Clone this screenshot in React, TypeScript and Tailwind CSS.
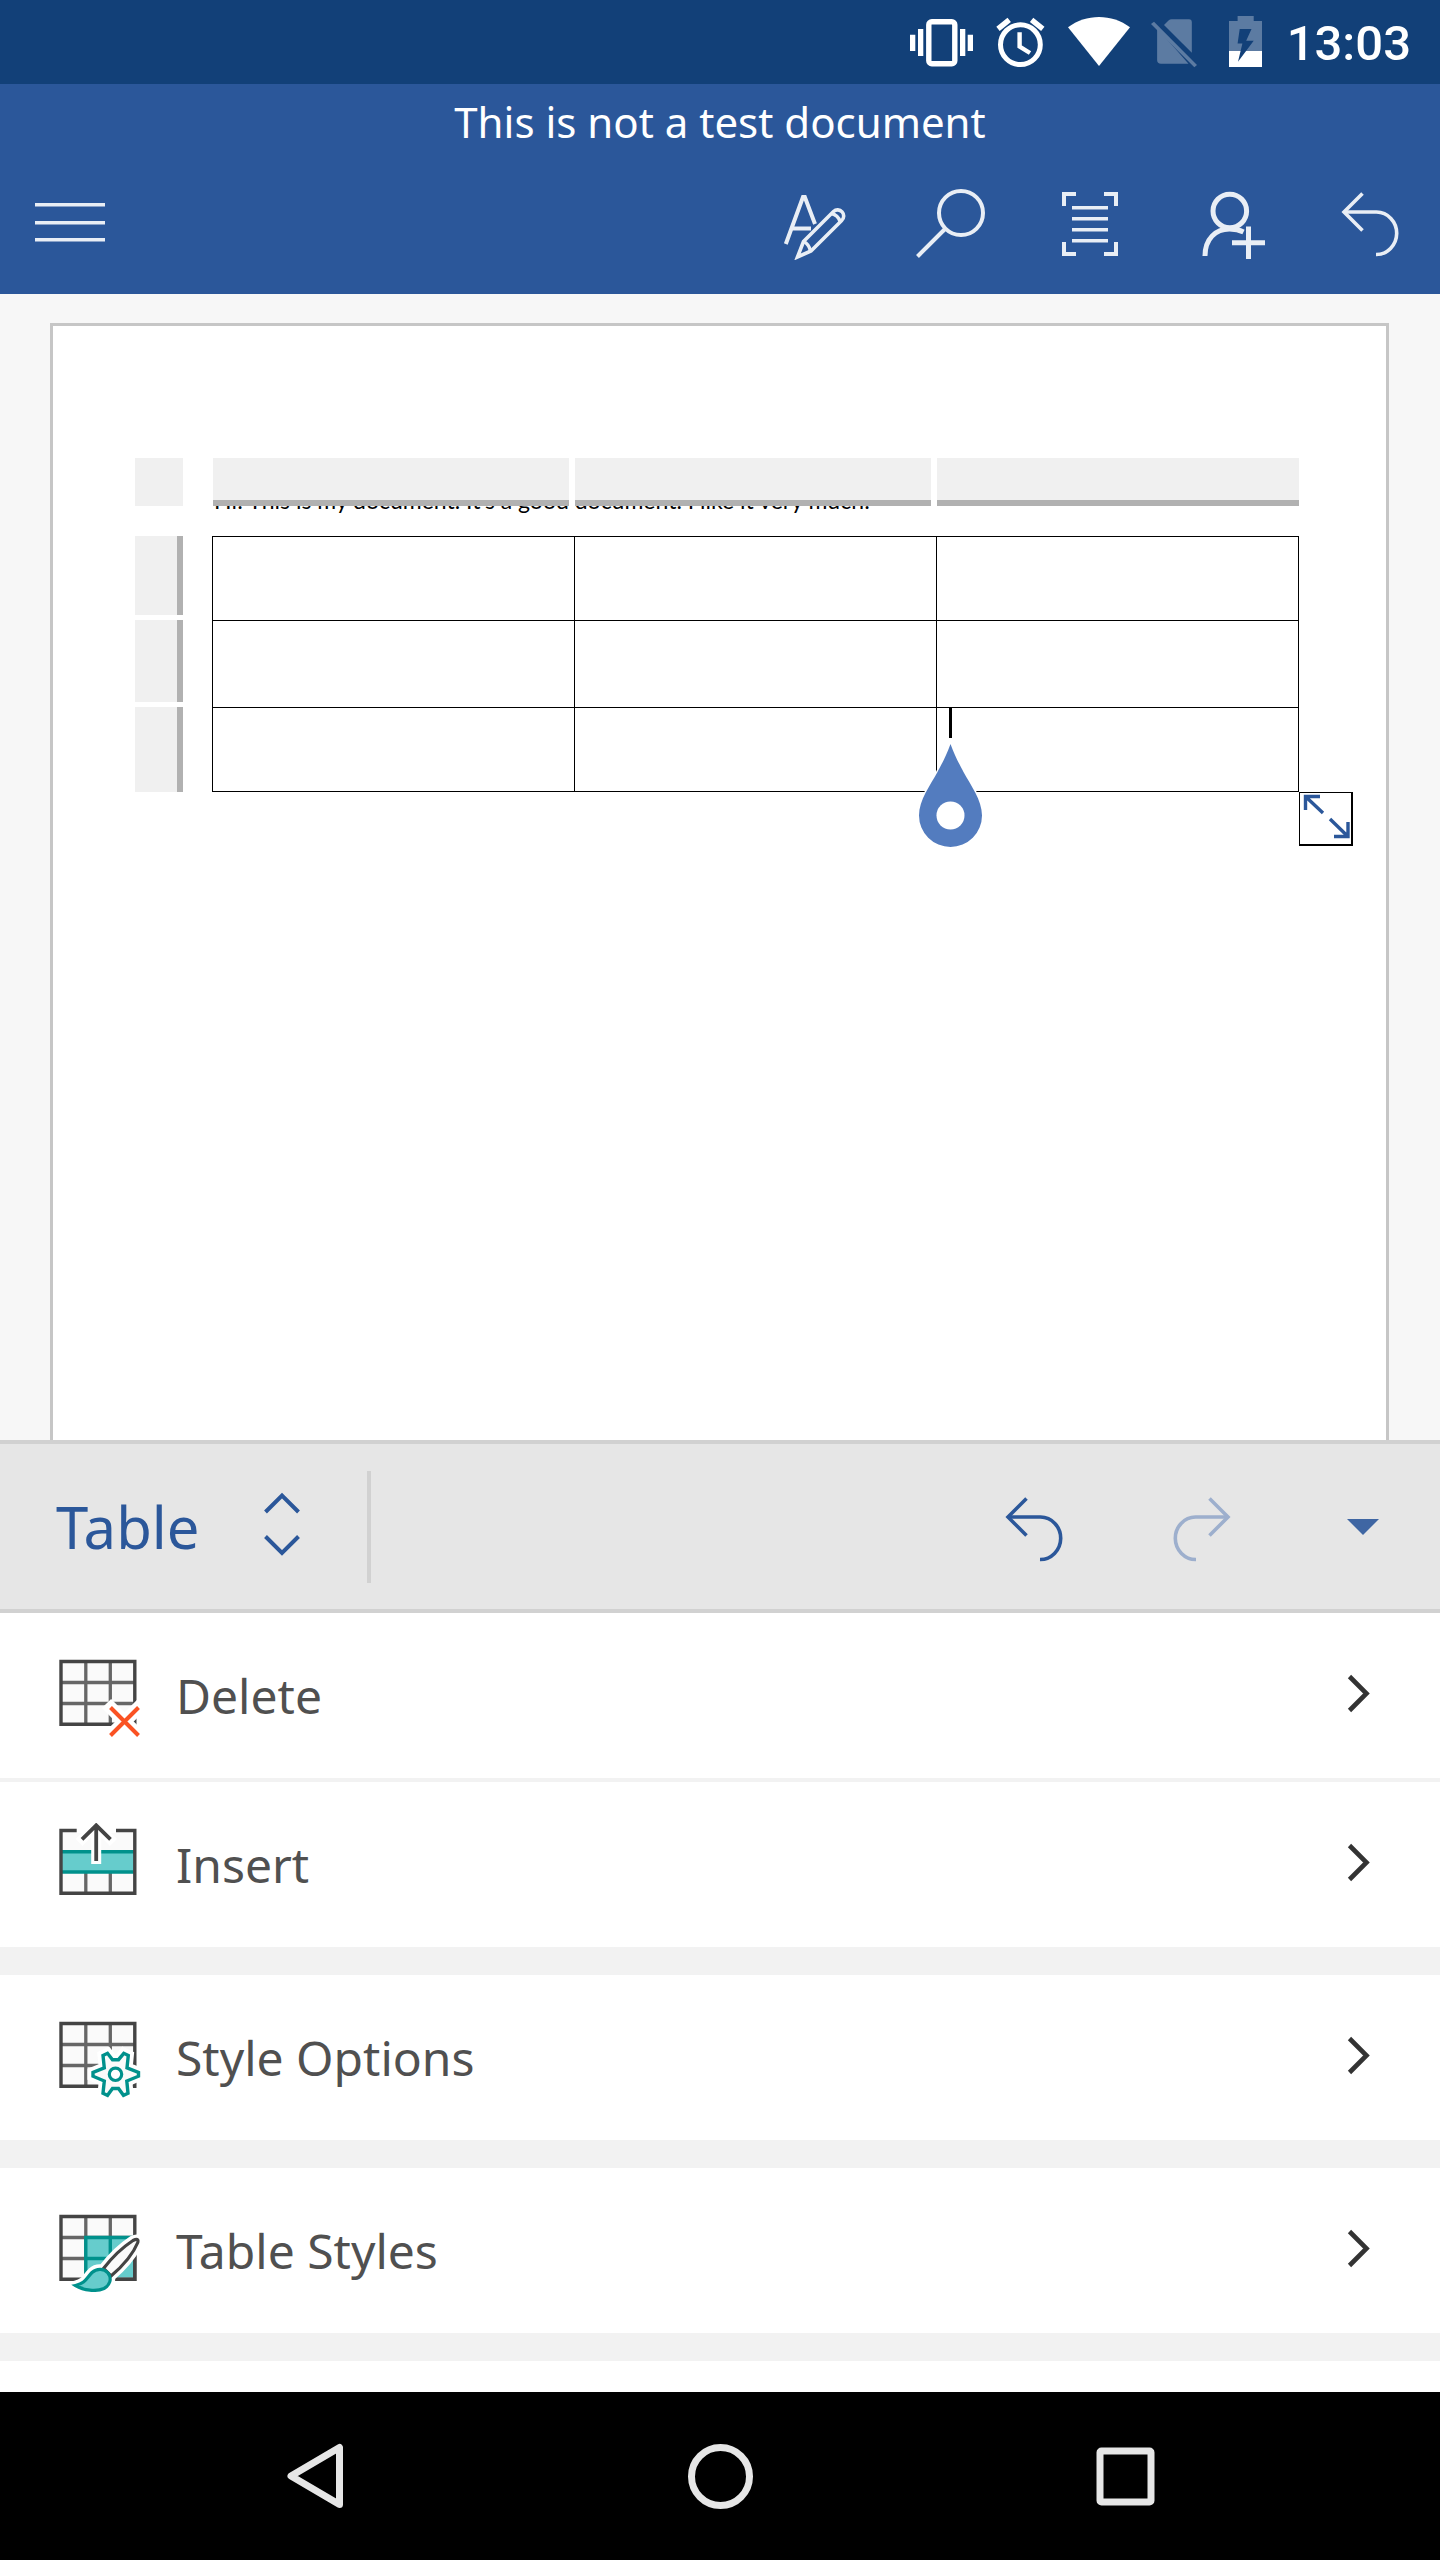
import type { ReactNode } from 'react';

interface IconProps {
  children: ReactNode;
  width?: number;
}

function StatusIcon({ children, width = 62 }: IconProps) {
  return (
    <svg width={width} height="52" viewBox={`0 0 ${width} 52`} fill="#fff" aria-hidden="true">
      {children}
    </svg>
  );
}

function StatusBar() {
  return (
    <div className="flex h-[84px] items-center justify-end gap-[21px] bg-[#124078] pr-[29px]">
      <StatusIcon width={65}>
        <rect x="18.8" y="5.7" width="26" height="42" rx="3" fill="none" stroke="#fff" strokeWidth="5.4" />
        <path d="M0 18.7h5.3V35H0zM8 13h5.3v27H8zM50 13h5.3v27H50zM57.7 18.7H63V35h-5.3z" />
      </StatusIcon>
      <StatusIcon width={51}>
        <g fill="none" stroke="#fff" strokeWidth="5">
          <circle cx="24.4" cy="28.7" r="19.9" />
          <path d="M23.6 16.3V30.5L34 37" strokeWidth="4.4" />
          <path d="M2 12.8 13.2 3.8M35.6 3.8 46.8 12.8" strokeWidth="5.4" />
        </g>
      </StatusIcon>
      <StatusIcon>
        <path d="M31 50 0 11.3C9 4.5 20 1 31 1s22 3.5 31 10.3z" />
      </StatusIcon>
      <StatusIcon width={57}>
        <g fill="#5c7ba2">
          <path d="M13 9 17.5 4.5Q19 3.3 20.5 3.3H38q2.8 0 2.8 3v30.4z" />
          <path d="M6.1 12 37.5 47.7H10q-3.9 0-3.9-4z" />
          <path d="M0 8 3 5.7 46 49l-2.7 2.3z" />
        </g>
      </StatusIcon>
      <StatusIcon width={37}>
        <path fill="#5c7ba2" d="M8.6 0h16.1v5H33v30H0V5h8.6z" />
        <path d="M0 35h33v16H0z" />
        <path fill="#124078" d="M10.7 13h11.8l-5.3 11.7h7.5L9 45.7l4.4-18.2H8.6z" />
      </StatusIcon>
      <time className="pt-1 font-[Roboto,sans-serif] text-[49px] leading-[56px] font-medium text-white">13:03</time>
    </div>
  );
}

function LineIcon({ children }: { children: ReactNode }) {
  return (
    <svg width="80" height="76" viewBox="0 0 80 76" fill="none" stroke="currentColor" strokeWidth="4" aria-hidden="true">
      {children}
    </svg>
  );
}

function UndoIcon() {
  return (
    <LineIcon>
      <path d="M32.5 9.5 14 28 32.5 46.5" strokeWidth="3.6" />
      <path d="M14 28H46.5A20.2 21 0 0 1 46 70.5" strokeWidth="3.6" />
    </LineIcon>
  );
}

function RedoIcon() {
  return (
    <LineIcon>
      <path d="M47.5 9.5 66 28 47.5 46.5" strokeWidth="3.6" />
      <path d="M66 28H33.5A20.2 21 0 0 0 34 70.5" strokeWidth="3.6" />
    </LineIcon>
  );
}

const headerActions = [
  {
    label: 'Edit',
    icon: (
      <LineIcon>
        <path d="M15.8 60 33 13h1.8L45 40M21.5 44.5H41" />
        <path d="M27.5 73 33.5 57.5 63.5 27.5a6 6 0 0 1 8.2 9L41 67z" strokeWidth="3.6" />
        <path d="M33.5 57.5Q39 60 40.5 67M61.5 29.5Q68 31 70 37.5" strokeWidth="3.4" />
      </LineIcon>
    ),
  },
  {
    label: 'Search',
    icon: (
      <LineIcon>
        <circle cx="51" cy="29" r="22" />
        <path d="M35.5 44.5 7.5 72.5" />
      </LineIcon>
    ),
  },
  {
    label: 'Reading view',
    icon: (
      <LineIcon>
        <path d="M14 22V10h12M54 10h12v12M66 58v12H54M26 70H14V58" />
        <path d="M22 23.8h36M22 34.8h36M22 45.8h36M22 56.8h36" strokeWidth="3.6" />
      </LineIcon>
    ),
  },
  {
    label: 'Share',
    icon: (
      <LineIcon>
        <g strokeWidth="5">
          <circle cx="39.8" cy="27" r="16.8" />
          <path d="M15 72C15 55 25.5 45 39.5 45q8 0 14 3M58.5 42.5V75M42 58.8h33" />
        </g>
      </LineIcon>
    ),
  },
  { label: 'Undo', icon: <UndoIcon /> },
];

function Header() {
  return (
    <header className="bg-[#2b579a] pt-[10px]">
      <h1 className="text-center text-[42px] leading-[56px] text-white">This is not a test document</h1>
      <div className="flex h-36 items-stretch justify-between text-[#e9eef5]">
        <button type="button" aria-label="Menu" className="flex w-[140px] items-center justify-center">
          <LineIcon>
            <path d="M5 20.8h70M5 38.8h70M5 55.8h70" strokeWidth="3.6" />
          </LineIcon>
        </button>
        <div className="flex">
          {headerActions.map(({ label, icon }) => (
            <button key={label} type="button" aria-label={label} className="flex w-[140px] items-center justify-center">
              {icon}
            </button>
          ))}
        </div>
      </div>
    </header>
  );
}

function InsertionHandle() {
  return (
    <>
      <span className="absolute top-0 left-3 h-[30px] w-[3px] bg-black" />
      <svg className="absolute top-9 -left-5" width="68" height="106" viewBox="0 0 68 106" aria-hidden="true">
        <path
          d="M33.5 0C38.5 14 43.5 22 46.5 28 53.5 41 65 56 65 71.5A31.5 31.5 0 0 1 2 71.5C2 56 13.500 41 20.500 28 23.500 22 28.500 14 33.500 0z"
          fill="#537cbf"
          stroke="#fff"
          strokeWidth="3"
          paintOrder="stroke"
        />
        <circle cx="33.5" cy="71.5" r="14" fill="#fff" />
      </svg>
    </>
  );
}

function DocumentTable() {
  return (
    <div className="relative">
      <table className="w-full table-fixed border-collapse">
        <tbody>
          {['h-[84px]', 'h-[87px]', 'h-[84px]'].map((height, row) => (
            <tr key={row} className={height}>
              {[0, 1, 2].map((col) => (
                <td key={col} className="relative border border-black p-0">
                  {row === 2 && col === 2 && <InsertionHandle />}
                </td>
              ))}
            </tr>
          ))}
        </tbody>
      </table>
      <button
        type="button"
        aria-label="Resize table"
        className="absolute top-full left-full flex h-[54px] w-[54px] items-center justify-center border-t border-r-2 border-b-2 border-l border-black bg-white text-[#2b579a]"
      >
        <svg width="50" height="50" viewBox="0 0 50 50" fill="none" stroke="currentColor" strokeWidth="3.4" aria-hidden="true">
          <path d="M4.5 16V2.5H19M4.5 2.5 22 19M47 28V42.5H33M47 42.5 29 25" />
        </svg>
      </button>
    </div>
  );
}

function DocumentView() {
  return (
    <main className="flex flex-1 flex-col overflow-hidden bg-[#f7f7f7] pt-[29px] pr-[51px] pl-[50px]">
      <article className="grid flex-1 grid-cols-[48px_1fr] grid-rows-[78px_auto] content-start gap-x-[29px] border-x-[3px] border-t-[3px] border-[#c6c6c6] bg-white pt-[132px] pr-[87px] pb-[200px] pl-[82px]">
        <div className="h-12 bg-[#f0f0f0]" />
        <p className="col-start-2 row-start-1 self-end pb-[22px] pl-[2px] font-[Lato,sans-serif] text-[23px] leading-7 whitespace-nowrap text-black">
          Hi! This is my document. It's a good document. I like it very much!
        </p>
        <div className="z-10 col-start-2 row-start-1 grid h-12 grid-cols-3 pl-px">
          <div className="mr-[6px] border-b-[6px] border-[#b1b1b1] bg-[#f0f0f0]" />
          <div className="mr-[6px] border-b-[6px] border-[#b1b1b1] bg-[#f0f0f0]" />
          <div className="border-b-[6px] border-[#b1b1b1] bg-[#f0f0f0]" />
        </div>
        <div className="grid grid-rows-[79px_82px_85px] gap-[5px]">
          <div className="border-r-[6px] border-[#b1b1b1] bg-[#f0f0f0]" />
          <div className="border-r-[6px] border-[#b1b1b1] bg-[#f0f0f0]" />
          <div className="border-r-[6px] border-[#b1b1b1] bg-[#f0f0f0]" />
        </div>
        <DocumentTable />
      </article>
    </main>
  );
}

function PaletteBar() {
  return (
    <div className="flex h-[173px] items-center border-y-4 border-[#d1d1d1] bg-[#e6e6e6] text-[#2b579a]">
      <button type="button" aria-haspopup="menu" className="flex h-full w-[367px] items-center justify-between pr-[67px] pl-14 text-[58px]">
        Table
        <svg width="36" height="70" viewBox="0 0 36 70" fill="none" stroke="currentColor" strokeWidth="4" aria-hidden="true">
          <path d="M1.5 20 18 3.5 34.5 20M1.5 44.5 18 61 34.5 44.5" />
        </svg>
      </button>
      <div className="h-28 w-1 bg-[#d1d1d1]" />
      <div className="ml-auto flex h-full">
        <button type="button" aria-label="Undo" className="flex w-[168px] items-center justify-center">
          <UndoIcon />
        </button>
        <button type="button" aria-label="Redo" className="flex w-[168px] items-center justify-center text-[#9dafcd]">
          <RedoIcon />
        </button>
        <button type="button" aria-label="Close palette" className="flex w-[154px] items-center justify-center text-[#3f66a3]">
          <svg width="32" height="16" viewBox="0 0 32 16" fill="currentColor" aria-hidden="true">
            <path d="M0 0h32L16 16z" />
          </svg>
        </button>
      </div>
    </div>
  );
}

function MenuIcon({ children }: { children: ReactNode }) {
  return (
    <svg width="82" height="83" viewBox="0 0 82 83" fill="none" aria-hidden="true">
      {children}
    </svg>
  );
}

function GridLines() {
  return (
    <>
      <path d="M2 7.5H75.8V70.3H2z" fill="#fafafa" />
      <path d="M26.8 7.5V70M51.3 7.5V70M2 28.5H76M2 49.5H76" stroke="#666" strokeWidth="3.3" />
      <path d="M2 7.5H75.8V70.3H2z" stroke="#444" strokeWidth="3.4" />
    </>
  );
}

function DeleteIcon() {
  return (
    <MenuIcon>
      <GridLines />
      <path d="M47.5 49.5 84 86M84 49 47.5 85.5" stroke="#fff" strokeWidth="13" />
      <path d="M51.5 53.5 79.5 81.5M79.5 53.5 51.5 81.5" stroke="#fa5223" strokeWidth="4" />
    </MenuIcon>
  );
}

function InsertIcon() {
  return (
    <MenuIcon>
      <path d="M2 7.5H75.8V70.3H2z" fill="#fafafa" />
      <path d="M26.8 50V70M51.3 50V70" stroke="#666" strokeWidth="3.3" />
      <path d="M2 28.7H76V49H2z" fill="#66cccc" />
      <path d="M2 28.7H76M2 49H76" stroke="#00918c" strokeWidth="3.4" />
      <path d="M2 7.5H75.8V70.3H2z" stroke="#444" strokeWidth="3.4" />
      <path d="M17.7 4H57V10H17.7z" fill="#fff" />
      <path d="M37.2 2V41M20 19.5 37.2 2.3 54.5 19.5" stroke="#fff" strokeWidth="10" />
      <path d="M37.2 2V38M23 16.3 37.2 2.3 51.5 16.3" stroke="#444" strokeWidth="3.8" />
    </MenuIcon>
  );
}

function StyleOptionsIcon() {
  const gear =
    'M34 56.5V60.2L45.3 65 44 77.3 48.5 79.3 53.5 72.5H59.5L64.5 79.3 69 77.3 67.8 65 79.5 60.2V56.5L68 51.8 69.3 39.5 64.8 37.3 59.5 43.7H53.5L48.5 37.3 44 39.5 45.3 51.8z';
  return (
    <MenuIcon>
      <GridLines />
      <path d={gear} fill="#fff" stroke="#fff" strokeWidth="11" />
      <path d={gear} fill="#fafafa" stroke="#00918c" strokeWidth="3.4" />
      <circle cx="56.5" cy="58.3" r="6.2" fill="#fff" stroke="#00918c" strokeWidth="3.2" />
    </MenuIcon>
  );
}

function TableStylesIcon() {
  const handle = 'M44.5 59.5Q58 42 74 31.5 80 28.5 78.8 33.5 72 50 52 67z';
  const bristles = 'M16.5 76.5C27 74 27 69.5 33 63.5 38 59 45 59.5 49 64 53.5 70 50.5 76.5 45 79.5 37 83 25 81.5 16.5 76.5z';
  return (
    <MenuIcon>
      <GridLines />
      <path d="M26.8 28.5H74V68.5H26.8z" fill="#66cccc" />
      <path d="M26.8 68.5V28.5H76M51.3 28.5V68.5M26.8 49.5H74" stroke="#00918c" strokeWidth="3.4" />
      <path d="M75.8 27V70.3H26" stroke="#444" strokeWidth="3.4" />
      <path d={handle} fill="#fff" stroke="#fff" strokeWidth="10" />
      <path d={bristles} fill="#fff" stroke="#fff" strokeWidth="10" />
      <path d={handle} fill="#fafafa" stroke="#444" strokeWidth="3.2" />
      <path d={bristles} fill="#66cccc" stroke="#00918c" strokeWidth="3.2" />
    </MenuIcon>
  );
}

const menuGroups = [
  [
    { label: 'Delete', icon: <DeleteIcon /> },
    { label: 'Insert', icon: <InsertIcon /> },
  ],
  [{ label: 'Style Options', icon: <StyleOptionsIcon /> }],
  [{ label: 'Table Styles', icon: <TableStylesIcon /> }],
];

function TableMenu() {
  return (
    <nav className="flex flex-col gap-7 bg-[#f2f2f2]">
      {menuGroups.map((group) => (
        <div key={group[0].label} className="flex flex-col gap-1">
          {group.map(({ label, icon }) => (
            <button
              key={label}
              type="button"
              className="flex h-[165px] w-full items-center bg-white pr-[69px] pl-[59px] text-[48px] text-[#505050]"
            >
              {icon}
              <span className="ml-[35px]">{label}</span>
              <svg className="ml-auto" width="24" height="44" viewBox="0 0 24 44" fill="none" stroke="#333" strokeWidth="4.6" aria-hidden="true">
                <path d="M2.5 2.5 19.5 19.5 2.5 36.5" />
              </svg>
            </button>
          ))}
        </div>
      ))}
      <div className="h-[31px] bg-white" />
    </nav>
  );
}

function NavigationBar() {
  return (
    <div className="grid h-[168px] grid-cols-3 bg-black px-28 text-[#e6e6e6]">
      <button type="button" aria-label="Back" className="flex items-center justify-center">
        <svg width="66" height="66" viewBox="0 0 66 66" fill="none" stroke="currentColor" strokeWidth="7" strokeLinejoin="round" aria-hidden="true">
          <path d="M57.5 4.5V61.5L9 33z" />
        </svg>
      </button>
      <button type="button" aria-label="Home" className="flex items-center justify-center">
        <svg width="66" height="66" viewBox="0 0 66 66" fill="none" stroke="currentColor" strokeWidth="7" aria-hidden="true">
          <circle cx="33.5" cy="33.5" r="29" />
        </svg>
      </button>
      <button type="button" aria-label="Recent apps" className="flex items-center justify-center">
        <svg width="66" height="66" viewBox="0 0 66 66" fill="none" stroke="currentColor" strokeWidth="7" aria-hidden="true">
          <rect x="8" y="8" width="51" height="51" rx="1.5" />
        </svg>
      </button>
    </div>
  );
}

export default function App() {
  return (
    <div className="flex min-h-screen flex-col bg-white font-['Noto_Sans',sans-serif]">
      <StatusBar />
      <Header />
      <DocumentView />
      <PaletteBar />
      <TableMenu />
      <NavigationBar />
    </div>
  );
}
